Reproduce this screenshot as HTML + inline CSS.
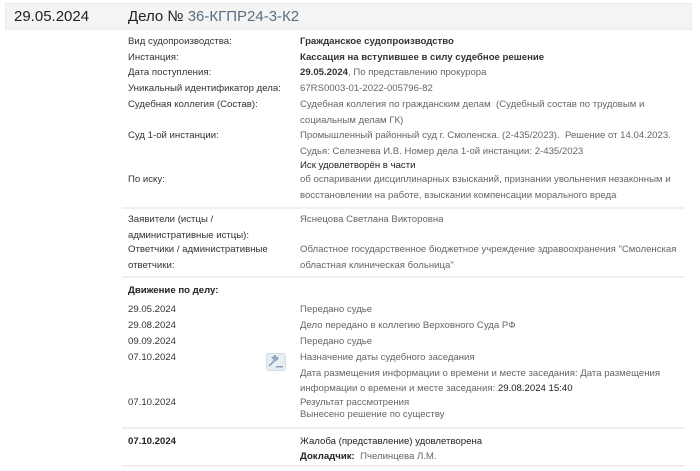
<!DOCTYPE html>
<html><head><meta charset="utf-8"><style>
body{margin:0;width:700px;height:471px;background:#fff;font-family:"Liberation Sans",sans-serif;position:relative;overflow:hidden}
.h{position:absolute;left:5px;top:3px;width:687px;height:27px;background:#f4f4f4;border:1px solid #ececec;box-sizing:border-box}
.t{position:absolute;white-space:nowrap;font-size:9.6px;color:#333;line-height:15.5px}
.v{color:#666}
.b{font-weight:bold;color:#333}
.hr{position:absolute;left:122px;width:563px;height:2px;background:#f0f0f0}
</style></head><body>
<div class="h"></div>
<div class="t" style="left:14px;top:6px;font-size:15px;line-height:22px;color:#222">29.05.2024</div>
<div class="t" style="left:128px;top:6px;font-size:15px;line-height:22px;color:#222">Дело № <span style="color:#5a6e80">36-КГПР24-3-К2</span></div>

<div class="t" style="left:128px;top:34px">Вид судопроизводства:</div>
<div class="t b" style="left:300px;top:34px">Гражданское судопроизводство</div>
<div class="t" style="left:128px;top:50px">Инстанция:</div>
<div class="t b" style="left:300px;top:50px">Кассация на вступившее в силу судебное решение</div>
<div class="t" style="left:128px;top:65px">Дата поступления:</div>
<div class="t v" style="left:300px;top:65px"><b style="color:#333">29.05.2024</b>, По представлению прокурора</div>
<div class="t" style="left:128px;top:81px">Уникальный идентификатор дела:</div>
<div class="t v" style="left:300px;top:81px">67RS0003-01-2022-005796-82</div>
<div class="t" style="left:128px;top:97px">Судебная коллегия (Состав):</div>
<div class="t v" style="left:300px;top:97px">Судебная коллегия по гражданским делам&nbsp; (Судебный состав по трудовым и<br>социальным делам ГК)</div>
<div class="t" style="left:128px;top:128px">Суд 1-ой инстанции:</div>
<div class="t v" style="left:300px;top:128px">Промышленный районный суд г. Смоленска. (2-435/2023).&nbsp; Решение от 14.04.2023.<br>Судья: Селезнева И.В. Номер дела 1-ой инстанции: 2-435/2023</div>
<div class="t b" style="left:300px;top:158px;font-weight:normal;color:#222">Иск удовлетворён в части</div>
<div class="t" style="left:128px;top:172px">По иску:</div>
<div class="t v" style="left:300px;top:172px">об оспаривании дисциплинарных взысканий, признании увольнения незаконным и<br>восстановлении на работе, взыскании компенсации морального вреда</div>
<div class="hr" style="top:207px"></div>
<div class="t" style="left:128px;top:212px">Заявители (истцы /<br>административные истцы):</div>
<div class="t v" style="left:300px;top:212px">Яснецова Светлана Викторовна</div>
<div class="t" style="left:128px;top:242px">Ответчики / административные<br>ответчики:</div>
<div class="t v" style="left:300px;top:242px">Областное государственное бюджетное учреждение здравоохранения "Смоленская<br>областная клиническая больница"</div>
<div class="hr" style="top:276px"></div>
<div class="t b" style="left:128px;top:283px;color:#222">Движение по делу:</div>
<div class="t" style="left:128px;top:302px">29.05.2024</div>
<div class="t v" style="left:300px;top:302px">Передано судье</div>
<div class="t" style="left:128px;top:318px">29.08.2024</div>
<div class="t v" style="left:300px;top:318px">Дело передано в коллегию Верховного Суда РФ</div>
<div class="t" style="left:128px;top:334px">09.09.2024</div>
<div class="t v" style="left:300px;top:334px">Передано судье</div>
<div class="t" style="left:128px;top:350px">07.10.2024</div>
<svg style="position:absolute;left:266px;top:353px" width="20" height="18" viewBox="0 0 20 18"><rect x="0.5" y="0.5" width="19" height="17" rx="2" fill="#e8edf3" stroke="#d3dbe4"/><path d="M6 4l4 4M8 2.5l4 4M7 5.5l3-3 M9 7.5 l3-3 M9 7 L3 13" stroke="#8aa0b8" stroke-width="1.6" fill="none"/><rect x="10" y="13" width="7" height="1.5" fill="#8aa0b8"/></svg>
<div class="t v" style="left:300px;top:350px">Назначение даты судебного заседания<br>Дата размещения информации о времени и месте заседания: Дата размещения<br>информации о времени и месте заседания: <span style="color:#222">29.08.2024 15:40</span></div>
<div class="t" style="left:128px;top:395px">07.10.2024</div>
<div class="t v" style="left:300px;top:395px">Результат рассмотрения</div>
<div class="t v" style="left:300px;top:407px">Вынесено решение по существу</div>
<div class="hr" style="top:427px"></div>
<div class="t b" style="left:128px;top:434px;color:#222">07.10.2024</div>
<div class="t" style="left:300px;top:434px;color:#222">Жалоба (представление) удовлетворена</div>
<div class="t" style="left:300px;top:449px;color:#222"><b>Докладчик:</b>&nbsp; <span style="color:#666">Пчелинцева Л.М.</span></div>
<div class="hr" style="top:465px"></div>
</body></html>
